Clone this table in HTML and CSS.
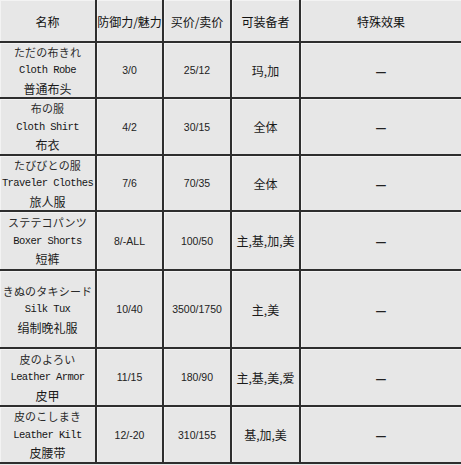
FILE: index.html
```html
<!DOCTYPE html>
<html lang="zh">
<head>
<meta charset="utf-8">
<title>装备表</title>
<link rel="stylesheet" href="styles.css">
</head>
<body>
<div class="table">
  <div class="cell head">名称</div>
  <div class="cell head">防御力/魅力</div>
  <div class="cell head">买价/卖价</div>
  <div class="cell head">可装备者</div>
  <div class="cell head last">特殊效果</div>

  <div class="cell name"><span class="jp">ただの布きれ</span><span class="en">Cloth Robe</span><span class="cn">普通布头</span></div>
  <div class="cell num">3/0</div>
  <div class="cell num">25/12</div>
  <div class="cell who">玛,加</div>
  <div class="cell dash last">—</div>

  <div class="cell name"><span class="jp">布の服</span><span class="en">Cloth Shirt</span><span class="cn">布衣</span></div>
  <div class="cell num">4/2</div>
  <div class="cell num">30/15</div>
  <div class="cell who">全体</div>
  <div class="cell dash last">—</div>

  <div class="cell name"><span class="jp">たびびとの服</span><span class="en">Traveler Clothes</span><span class="cn">旅人服</span></div>
  <div class="cell num">7/6</div>
  <div class="cell num">70/35</div>
  <div class="cell who">全体</div>
  <div class="cell dash last">—</div>

  <div class="cell name"><span class="jp">ステテコパンツ</span><span class="en">Boxer Shorts</span><span class="cn">短裤</span></div>
  <div class="cell num">8/-ALL</div>
  <div class="cell num">100/50</div>
  <div class="cell who">主,基,加,美</div>
  <div class="cell dash last">—</div>

  <div class="cell name"><span class="jp">きぬのタキシード</span><span class="en">Silk Tux</span><span class="cn">绢制晚礼服</span></div>
  <div class="cell num">10/40</div>
  <div class="cell num">3500/1750</div>
  <div class="cell who">主,美</div>
  <div class="cell dash last">—</div>

  <div class="cell name"><span class="jp">皮のよろい</span><span class="en">Leather Armor</span><span class="cn">皮甲</span></div>
  <div class="cell num">11/15</div>
  <div class="cell num">180/90</div>
  <div class="cell who">主,基,美,爱</div>
  <div class="cell dash last">—</div>

  <div class="cell name"><span class="jp">皮のこしまき</span><span class="en">Leather Kilt</span><span class="cn">皮腰带</span></div>
  <div class="cell num">12/-20</div>
  <div class="cell num">310/155</div>
  <div class="cell who">基,加,美</div>
  <div class="cell dash last">—</div>
</div>
</body>
</html>
```

FILE: styles.css
```css
html, body {
  margin: 0;
  padding: 0;
  background: #e7e7e7;
}

body {
  width: 461px;
  height: 465px;
  overflow: hidden;
  font-family: "Noto Sans CJK SC", "Liberation Sans", sans-serif;
  color: #1e1e1e;
}

.table {
  display: grid;
  grid-template-columns: 97px 67px 68px 69px 1fr;
  grid-template-rows: 43px 56px 57px 56px 59px 78px 58px 57px;
  background: #e7e7e7;
}

.cell {
  box-sizing: border-box;
  border-right: 2px solid #2e2e2e;
  border-bottom: 2px solid #2e2e2e;
  box-shadow: inset 1px 1px 0 #f3f3f3;
  display: flex;
  flex-direction: column;
  align-items: center;
  justify-content: center;
  text-align: center;
  white-space: nowrap;
  font-size: 12px;
}

.cell.last {
  border-right: none;
}

.head {
  font-size: 12px;
  color: #111;
  padding-top: 1px;
}

.name {
  line-height: 18.5px;
  padding-top: 1px;
}

.jp {
  font-family: "Noto Sans CJK JP", sans-serif;
  font-size: 11px;
  letter-spacing: 0.2px;
  color: #2a2a2a;
}

.en {
  font-family: "Liberation Mono", monospace;
  font-size: 10.5px;
  letter-spacing: -0.6px;
  color: #161616;
}

.cn {
  font-family: "Noto Sans CJK SC", sans-serif;
  font-size: 12px;
  color: #1a1a1a;
}

.num {
  font-family: "Liberation Sans", sans-serif;
  font-size: 10.5px;
  color: #222;
}

.who {
  font-size: 12px;
  color: #1a1a1a;
}

.dash {
  font-size: 12px;
  font-weight: 700;
  color: #222;
}
```
